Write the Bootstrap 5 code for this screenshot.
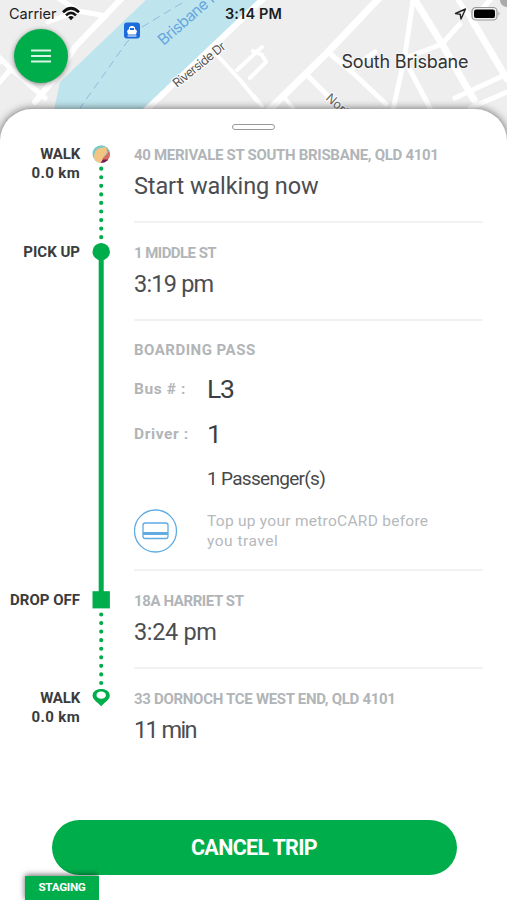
<!DOCTYPE html>
<html lang="en">
<head>
<meta charset="utf-8">
<meta name="viewport" content="width=device-width, initial-scale=1">
<title>Trip</title>
<link href="https://cdn.jsdelivr.net/npm/bootstrap@5.3.0/dist/css/bootstrap.min.css" rel="stylesheet">
<style>
  :root { --brand: #00ad4b; }
  body { font-family: Roboto, "Liberation Sans", sans-serif; background: #fff; }
  .phone { width: 507px; height: 900px; }
  .map-area { height: 109px; font-family: Inter, "Liberation Sans", sans-serif; }
  .status { height: 28px; padding: 0 7px 0 9px; font-size: 14.5px; color: #1c1c1e; }
  .status .clock { font-weight: 600; letter-spacing: .15px; }
  .menu-btn { width: 54px; height: 54px; margin: 1px 0 0 13.5px; background: var(--brand); box-shadow: 0 1px 5px rgba(0,0,0,.45); }
  .sheet { height: 791px; border-radius: 32px 32px 0 0; box-shadow: 0 0 9px rgba(0,0,0,.6); }
  .handle-wrap { height: 17px; padding-top: 14.5px; }
  .handle { width: 43px; height: 6px; flex: none; border: 1.3px solid #999; }
  .trip-grid { display: grid; grid-template-rows: 97px 98px 250px 98px 98px; }
  .stops { width: 80px; font-weight: 700; font-size: 15px; line-height: 18.5px; color: #3a3b3d; text-align: right; white-space: nowrap; }
  .stops > div { padding-top: 20px; }
  .stops > div:first-child { padding-top: 19px; }
  .t-walk { letter-spacing: -.2px; }
  .t-km { letter-spacing: .35px; }
  .details { width: 349px; }
  .details > section { padding-top: 20px; border-bottom: 2px solid #f1f2f3; white-space: nowrap; }
  .details > section.boarding { padding-top: 19px; }
  .details > section:last-child { border: 0; }
  .addr { font-weight: 700; font-size: 15px; line-height: 20px; letter-spacing: -.3px; color: #b1b5b8; }
  .big { font-size: 23.5px; line-height: 30px; margin-top: 6px; color: #4b4d50; }
  .details > section:first-child { padding-top: 19px; }
  .t-a2 { letter-spacing: -.55px; }
  .t-a3 { letter-spacing: .5px; }
  .t-a4 { letter-spacing: -.4px; }
  .t-b1 { letter-spacing: -.1px; }
  .t-b2 { letter-spacing: -.8px; }
  .t-b4 { letter-spacing: -.35px; }
  .t-b5 { letter-spacing: -1.6px; }
  .fields { margin: 7px 0 9px; }
  .field { height: 45px; }
  .field dt { width: 73px; font-size: 15.5px; letter-spacing: .6px; color: #b1b5b8; font-weight: 700; }
  .field dd { font-size: 26.5px; line-height: 43px; letter-spacing: -1.2px; color: #3d3e40; padding-bottom: 2px; }
  .pax { font-size: 19px; line-height: 26px; margin-left: 73px; letter-spacing: -.7px; color: #47484a; }
  .tip-row { margin-top: 17px; }
  .tip { font-size: 15.5px; line-height: 20px; letter-spacing: .27px; color: #b5b9bc; }
  .t-t2 { letter-spacing: .5px; }
  .cancel { width: 405px; height: 55px; margin: 53px auto 0 51.5px; background: var(--brand); color: #fff; font-weight: 700; font-size: 21.5px; letter-spacing: -.68px; padding: 2px 0 0 !important; }
  .staging { left: 25px; bottom: 0; width: 74px; height: 24px; background: var(--brand); color: #fff; font-size: 11.7px; font-weight: 700; letter-spacing: -.3px; clip-path: inset(-10px 0 0 -10px); box-shadow: 0 -1px 6px rgba(0,0,0,.6); }
</style>
</head>
<body>
<main class="phone position-relative overflow-hidden">
  <header class="map-area position-relative">
    <svg class="position-absolute top-0 start-0" width="507" height="150" viewBox="0 0 507 150">
      <rect width="507" height="150" fill="#eeeeef"/>
      <path d="M150 -4L60 82 54 110 52 150H120L150 105 262 4V-4Z" fill="#bee5ed"/>
      <g stroke="#fff" fill="none" stroke-linecap="round" stroke-linejoin="round">
        <path stroke-width="6" d="M124 -4L75 47 55 78 35 102M146 110L186 72 265 -3"/>
        <path stroke-width="5" d="M58 -2L78 11 106 16M78 11L48 22M-2 56L10 68 45 98M-2 84L10 70M0 62L-2 56"/>
        <path stroke-width="7" d="M381 -4L328 52 277 102 262 118M415 0L442 44 474 100M472 20L507 79"/>
        <path stroke-width="5" d="M413 0L405 55 393 110M460 24L442 44 408 57M472 20L490 0M328 52L353 73 386 104M308 76L338 106M410 70L430 108M455 98L507 74M470 108L507 92M458 0L472 20M350 70L375 52"/>
        <path stroke-width="4" d="M217 55L240 80 257 101M237 70L262 47M253 51L262 55 266 62 250 78M253 95L262 106M283 96L293 108"/>
      </g>
      <path d="M182 3L142 27 127 42 80 108" fill="none" stroke="#93b9dc" stroke-width="1" stroke-dasharray="8 5"/>
      <rect x="124" y="22.500" width="16" height="16" rx="3" fill="#1b6bdb"/>
      <path d="M129 29V27.500Q132 24 135 27.500V29L137 31 136 34.500H128L127 31ZM127.500 35.500H136.500V36.500H127.500Z" fill="#fff"/>
      <path d="M130 28H134V30H130Z" fill="#1b6bdb"/>
      <text transform="translate(163.500 46) rotate(-41)" font-size="15.500" fill="#69a5df" letter-spacing="-.5">Brisbane R</text>
      <text transform="translate(177 88) rotate(-39)" font-size="12.500" fill="#555" stroke="#fff" stroke-width="2" paint-order="stroke" textLength="64">Riverside Dr</text>
      <text transform="translate(325 99) rotate(42)" font-size="12.500" fill="#666" stroke="#fff" stroke-width="2" paint-order="stroke">North</text>
      <text x="341.500" y="68" font-size="18" fill="#333" stroke="#f6f6f6" stroke-width="2" paint-order="stroke" textLength="127">South Brisbane</text>
      <circle cx="507" cy="0" r="7" fill="#aaa"/>
    </svg>
    <div class="status position-relative d-flex align-items-center">
      <span>Carrier</span>
      <svg class="ms-1" width="20" height="16" viewBox="0 0 20 16"><g fill="none" stroke="#111" stroke-width="2.600"><path d="M2 6.200Q10 -1.700 18 6.200"/><path d="M5 9.400Q10 4.400 15 9.400"/></g><path d="M7.200 11.300Q10 8.900 12.800 11.300L10 14.300Z" fill="#111"/></svg>
      <span class="clock position-absolute start-50 translate-middle-x text-nowrap">3:14 PM</span>
      <svg class="ms-auto" width="46" height="16" viewBox="0 0 46 16"><path d="M1.500 7.500L11.500 3 7 13 6.200 8.200Z" fill="none" stroke="#222" stroke-width="1.400" stroke-linejoin="round"/><rect x="18" y="1.500" width="25" height="12.500" rx="3.800" fill="#eee" stroke="#999" stroke-width="1.200"/><rect x="20" y="3.400" width="21" height="8.700" rx="2.200" fill="#000"/><path d="M44.500 5.700Q46.500 7.700 44.500 9.700Z" fill="#999"/></svg>
    </div>
    <button class="menu-btn btn border-0 rounded-circle position-relative p-0 d-flex align-items-center justify-content-center" aria-label="Menu">
      <svg width="20" height="14" viewBox="0 0 20 14"><path d="M0 1.500H20M0 7H20M0 12.500H20" stroke="#d9f5e3" stroke-width="2"/></svg>
    </button>
  </header>

  <div class="sheet bg-white position-relative">
    <div class="handle-wrap d-flex justify-content-center"><div class="handle rounded-pill"></div></div>
    <div class="d-flex">
      <div class="stops trip-grid">
        <div><span class="t-walk">WALK</span><br><span class="t-km">0.0 km</span></div>
        <div>PICK UP</div>
        <div></div>
        <div>DROP OFF</div>
        <div><span class="t-walk">WALK</span><br><span class="t-km">0.0 km</span></div>
      </div>
      <svg class="flex-shrink-0" width="54" height="641" viewBox="80 126 54 641">
        <defs><clipPath id="face"><circle cx="101.300" cy="154" r="8.800"/></clipPath></defs>
        <g clip-path="url(#face)">
          <rect x="92" y="145" width="19" height="19" fill="#77c9ca"/>
          <path d="M94 158Q94 149 100 148L106 147 108 151 103 158 103 163H96Z" fill="#f3c583"/>
          <path d="M106 148L108 153 103 158 101 163H108L111 155Z" fill="#dc6a60"/>
          <path d="M100 164L103 159.500 108 159.500 107 164Z" fill="#6b1f52"/>
        </g>
        <g stroke="#00ad4b" stroke-width="4.200" stroke-linecap="round" stroke-dasharray="0 8.560">
          <path d="M101.200 168.700V238"/><path d="M101.200 614.500V684"/>
        </g>
        <path d="M101.200 252V600" stroke="#00ad4b" stroke-width="5"/>
        <circle cx="101.200" cy="251.700" r="8.700" fill="#00ad4b"/>
        <rect x="92.500" y="591.200" width="17.400" height="17.200" fill="#00ad4b"/>
        <path fill-rule="evenodd" fill="#00ad4b" d="M101.200 689C106 689 109.800 691.500 109.800 695.600 109.800 699.500 106 701.500 101.200 706.200 96.400 701.500 92.600 699.500 92.600 695.600 92.600 691.500 96.400 689 101.200 689ZM101.200 691.600C98.600 691.600 96.500 693 96.500 695.200S98.600 698.800 101.200 698.800 105.900 697.400 105.900 695.200 103.800 691.600 101.200 691.600Z"/>
      </svg>
      <div class="details trip-grid">
        <section><div class="addr">40 MERIVALE ST SOUTH BRISBANE, QLD 4101</div><div class="big t-b1">Start walking now</div></section>
        <section><div class="addr t-a2">1 MIDDLE ST</div><div class="big t-b2">3:19 pm</div></section>
        <section class="boarding">
          <div class="addr t-a3">BOARDING PASS</div>
          <dl class="fields">
            <div class="field d-flex align-items-center"><dt>Bus # :</dt><dd class="mb-0">L3</dd></div>
            <div class="field d-flex align-items-center"><dt>Driver :</dt><dd class="mb-0">1</dd></div>
          </dl>
          <div class="pax">1 Passenger(s)</div>
          <div class="tip-row d-flex align-items-center">
            <svg class="flex-shrink-0" width="73" height="44" viewBox="0 0 73 44" fill="none" stroke="#5fabe2" stroke-width="1.300"><circle cx="21.500" cy="22" r="21"/><rect x="9" y="14" width="25" height="15.500" rx="2.200"/><path d="M9 24.500H34" stroke-width="3"/></svg>
            <div class="tip">Top up your metroCARD before<br><span class="t-t2">you travel</span></div>
          </div>
        </section>
        <section><div class="addr t-a4">18A HARRIET ST</div><div class="big t-b4">3:24 pm</div></section>
        <section><div class="addr">33 DORNOCH TCE WEST END, QLD 4101</div><div class="big t-b5">11 min</div></section>
      </div>
    </div>
    <button class="cancel btn rounded-pill border-0 d-block">CANCEL TRIP</button>
    <div class="staging position-absolute d-flex align-items-center justify-content-center">STAGING</div>
  </div>
</main>
<script src="https://cdn.jsdelivr.net/npm/bootstrap@5.3.0/dist/js/bootstrap.bundle.min.js"></script>
</body>
</html>
